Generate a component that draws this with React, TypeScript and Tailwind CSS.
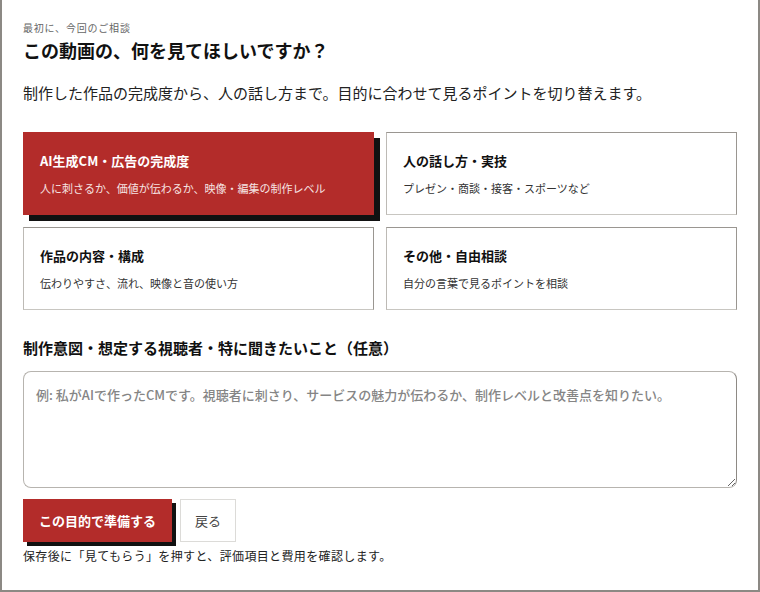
import { useState } from "react";

const FONT = { fontFamily: '"Noto Sans CJK JP", "Noto Sans", sans-serif' };

const PURPOSES = [
  { id: "ad", title: "AI生成CM・広告の完成度", desc: "人に刺さるか、価値が伝わるか、映像・編集の制作レベル" },
  { id: "talk", title: "人の話し方・実技", desc: "プレゼン・商談・接客・スポーツなど" },
  { id: "content", title: "作品の内容・構成", desc: "伝わりやすさ、流れ、映像と音の使い方" },
  { id: "other", title: "その他・自由相談", desc: "自分の言葉で見るポイントを相談" },
];

export default function App() {
  const [selected, setSelected] = useState("ad");
  const [note, setNote] = useState("");

  return (
    <div style={FONT} className="w-[760px] h-[592px] bg-white text-[#1a1a1a]">
      <div className="h-full border-x-2 border-b-2 border-[#8c8984] px-[21px] pt-5">
        <p className="text-[10px] leading-[15px] tracking-[0.08em] text-[#666]">最初に、今回のご相談</p>
        <h1 className="mt-[2px] text-[18px] leading-[26px] font-bold text-[#111]">
          この動画の、何を見てほしいですか？
        </h1>
        <p className="mt-[18px] text-[15px] leading-[24px] text-[#222]">
          制作した作品の完成度から、人の話し方まで。目的に合わせて見るポイントを切り替えます。
        </p>

        <div className="mt-[27px] grid grid-cols-2 gap-x-3 gap-y-3">
          {PURPOSES.map((p) => {
            const active = selected === p.id;
            return (
              <button
                key={p.id}
                onClick={() => setSelected(p.id)}
                className={
                  active
                    ? "h-[83px] text-left px-[17px] bg-[#b32c2a] text-white shadow-[6px_6px_0_#111]"
                    : "h-[83px] text-left px-4 bg-white border border-[#9a9691] border-b-[#c8c6c1] border-l-[#bdbab5] text-[#111]"
                }
              >
                <div className="text-[13px] leading-[18px] font-bold">{p.title}</div>
                <div className={`mt-[10px] text-[11px] leading-[16px] ${active ? "text-[#f6e4e3]" : "text-[#333]"}`}>
                  {p.desc}
                </div>
              </button>
            );
          })}
        </div>

        <label className="block mt-[27px] text-[15px] leading-[22px] font-bold text-[#111]">
          制作意図・想定する視聴者・特に聞きたいこと（任意）
        </label>
        <textarea
          value={note}
          onChange={(e) => setNote(e.target.value)}
          placeholder="例: 私がAIで作ったCMです。視聴者に刺さり、サービスの魅力が伝わるか、制作レベルと改善点を知りたい。"
          className="mt-3 block w-full h-[117px] rounded-lg border border-[#b7b4af] border-r-[#8e8a85] px-3 py-[13px] text-[13px] leading-[20px] font-medium text-[#222] placeholder:text-[#858585] outline-none"
        />

        <div className="mt-[11px] flex gap-2">
          <button className="h-[43px] px-4 bg-[#b32c2a] text-white text-[13px] font-bold shadow-[4px_4px_0_#111]">
            この目的で準備する
          </button>
          <button className="h-[43px] px-[14px] bg-white border border-[#dcdbd8] text-[13px] text-[#444]">
            戻る
          </button>
        </div>
        <p className="mt-[5px] text-[12px] leading-[18px] tracking-[0.03em] text-[#222]">
          保存後に「見てもらう」を押すと、評価項目と費用を確認します。
        </p>
      </div>
    </div>
  );
}
